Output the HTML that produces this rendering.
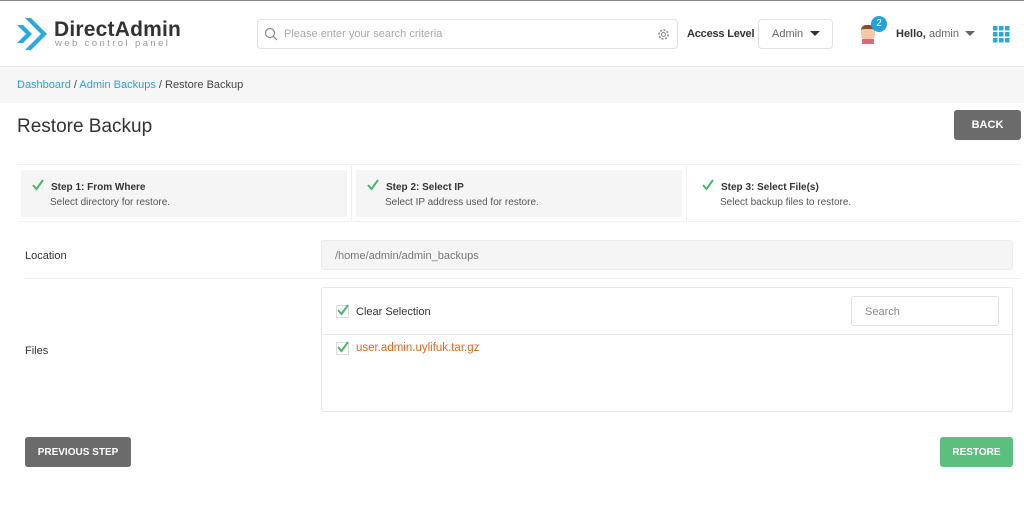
<!DOCTYPE html>
<html><head><style>
*{box-sizing:border-box;margin:0;padding:0}
body{width:1024px;height:509px;background:#fff;font-family:"Liberation Sans",sans-serif;color:#333;position:relative;overflow:hidden;font-size:11px}
.a{position:absolute}
.chk{position:absolute;width:13px;height:13px}
</style></head><body>
<div class="a" style="left:0;top:0;width:1024px;height:1px;background:#888"></div>
<div class="a" style="left:0;top:66px;width:1024px;height:37px;background:#f6f6f7;border-top:1px solid #e8e8e8"></div>
<!-- logo -->
<svg class="a" style="left:16px;top:16px" width="32" height="36" viewBox="0 0 32 36"><path d="M1 9 L10 18 L1 27 L7 27 L16 18 L7 9Z" fill="#2aa8e0"/><path d="M9 2 L25 18 L9 34 L15 34 L31 18 L15 2Z" fill="#2aa8e0"/></svg>
<div class="a" style="left:54px;top:18px;font-size:21px;font-weight:bold;color:#333;letter-spacing:0.2px">DirectAdmin</div>
<div class="a" style="left:55px;top:38px;font-size:9.5px;color:#999;letter-spacing:2.4px">web control panel</div>
<!-- search -->
<div class="a" style="left:257px;top:19px;width:421px;height:30px;border:1px solid #e2e2e2;border-radius:4px"></div>
<svg class="a" style="left:264px;top:27px" width="14" height="14"><circle cx="6" cy="6" r="4.5" fill="none" stroke="#888" stroke-width="1.2"/><path d="M9.5 9.5L13 13" stroke="#888" stroke-width="1.2"/></svg>
<div class="a" style="left:284px;top:28px;font-size:11px;color:#aaa">Please enter your search criteria</div>
<svg class="a" style="left:657px;top:28px" width="13" height="13"><circle cx="6.5" cy="6.5" r="4.5" fill="none" stroke="#888" stroke-width="1.5" stroke-dasharray="2 1.5"/><circle cx="6.5" cy="6.5" r="2" fill="none" stroke="#888"/></svg>
<div class="a" style="left:687px;top:28px;font-size:11px;font-weight:bold;letter-spacing:-0.2px">Access Level</div>
<div class="a" style="left:758px;top:19px;width:75px;height:30px;border:1px solid #e2e2e2;border-radius:4px"></div>
<div class="a" style="left:772px;top:28px;font-size:11px;color:#666">Admin</div>
<div class="a" style="left:810px;top:31px;border:5px solid transparent;border-top:5px solid #333"></div>
<!-- avatar -->
<div class="a" style="left:861px;top:25px;width:14px;height:15px;background:#f5c9a6;border-radius:5px;border-top:4px solid #8a4b2a"></div>
<div class="a" style="left:862px;top:39px;width:12px;height:5px;background:#d46a7a"></div>
<div class="a" style="left:871px;top:16px;width:16px;height:16px;border-radius:50%;background:#23a3dd;color:#fff;font-size:10px;text-align:center;line-height:16px">2</div>
<div class="a" style="left:896px;top:28px;font-size:11px"><b>Hello,</b> <span style="color:#666">admin</span></div>
<div class="a" style="left:965px;top:31px;border:5px solid transparent;border-top:5px solid #666"></div>
<svg class="a" style="left:993px;top:26px" width="17" height="17"><g fill="#2aa8e0"><rect x="0" y="0" width="4.5" height="4.5"/><rect x="6" y="0" width="4.5" height="4.5"/><rect x="12" y="0" width="4.5" height="4.5"/><rect x="0" y="6" width="4.5" height="4.5"/><rect x="6" y="6" width="4.5" height="4.5"/><rect x="12" y="6" width="4.5" height="4.5"/><rect x="0" y="12" width="4.5" height="4.5"/><rect x="6" y="12" width="4.5" height="4.5"/><rect x="12" y="12" width="4.5" height="4.5"/></g></svg>
<!-- breadcrumb -->
<div class="a" style="left:17px;top:79px;font-size:11px;color:#444"><span style="color:#2aa0dc">Dashboard</span> / <span style="color:#2aa0dc">Admin Backups</span> / Restore Backup</div>
<div class="a" style="left:17px;top:116px;font-size:19px;color:#333">Restore Backup</div>
<div class="a" style="left:954px;top:110px;width:67px;height:30px;background:#6b6b6b;border-radius:3px;color:#fff;font-weight:bold;font-size:11px;text-align:center;line-height:31px">BACK</div>
<!-- steps -->
<div class="a" style="left:17px;top:164px;width:1004px;height:1px;background:#f0f0f0"></div>
<div class="a" style="left:17px;top:221px;width:1004px;height:1px;background:#f0f0f0"></div>
<div class="a" style="left:21px;top:170px;width:326px;height:47px;background:#f5f5f5"></div>
<div class="a" style="left:356px;top:170px;width:326px;height:47px;background:#f5f5f5"></div>
<div class="a" style="left:351px;top:166px;width:1px;height:55px;background:#f0f0f0"></div>
<div class="a" style="left:686px;top:166px;width:1px;height:55px;background:#f0f0f0"></div>
<svg class="chk" style="left:31px;top:178px"><path d="M2 7l3.5 4L12 2" fill="none" stroke="#4cb56e" stroke-width="2"/></svg>
<div class="a" style="left:51px;top:182px;font-size:10px;font-weight:bold">Step 1: From Where</div>
<div class="a" style="left:50px;top:197px;font-size:10px;color:#555">Select directory for restore.</div>
<svg class="chk" style="left:366px;top:178px"><path d="M2 7l3.5 4L12 2" fill="none" stroke="#4cb56e" stroke-width="2"/></svg>
<div class="a" style="left:386px;top:182px;font-size:10px;font-weight:bold">Step 2: Select IP</div>
<div class="a" style="left:385px;top:197px;font-size:10px;color:#555">Select IP address used for restore.</div>
<svg class="chk" style="left:701px;top:178px"><path d="M2 7l3.5 4L12 2" fill="none" stroke="#4cb56e" stroke-width="2"/></svg>
<div class="a" style="left:721px;top:182px;font-size:10px;font-weight:bold">Step 3: Select File(s)</div>
<div class="a" style="left:720px;top:197px;font-size:10px;color:#555">Select backup files to restore.</div>
<!-- location -->
<div class="a" style="left:25px;top:250px;font-size:11px">Location</div>
<div class="a" style="left:321px;top:240px;width:692px;height:30px;background:#f5f5f5;border:1px solid #ebebeb;border-radius:3px"></div>
<div class="a" style="left:335px;top:250px;font-size:11px;color:#777">/home/admin/admin_backups</div>
<div class="a" style="left:25px;top:278px;width:996px;height:1px;background:#eee"></div>
<!-- files -->
<div class="a" style="left:25px;top:345px;font-size:11px">Files</div>
<div class="a" style="left:321px;top:287px;width:692px;height:125px;border:1px solid #e6e6e6;border-radius:3px"></div>
<div class="a" style="left:322px;top:334px;width:690px;height:1px;background:#e8e8e8"></div>
<div class="a" style="left:336px;top:305px;width:13px;height:13px;border:1px solid #ddd"></div>
<svg class="chk" style="left:336px;top:303px"><path d="M2 7l3.5 4L12 2" fill="none" stroke="#4cb56e" stroke-width="2"/></svg>
<div class="a" style="left:356px;top:306px;font-size:11px">Clear Selection</div>
<div class="a" style="left:851px;top:296px;width:148px;height:30px;border:1px solid #e2e2e2;border-radius:3px"></div>
<div class="a" style="left:865px;top:306px;font-size:11px;color:#888">Search</div>
<div class="a" style="left:336px;top:342px;width:13px;height:13px;border:1px solid #ddd"></div>
<svg class="chk" style="left:336px;top:340px"><path d="M2 7l3.5 4L12 2" fill="none" stroke="#4cb56e" stroke-width="2"/></svg>
<div class="a" style="left:356px;top:342px;font-size:11.5px;color:#e8661d">user.admin.uylifuk.tar.gz</div>
<!-- buttons -->
<div class="a" style="left:25px;top:437px;width:106px;height:30px;background:#6b6b6b;border-radius:3px;color:#fff;font-weight:bold;font-size:10px;text-align:center;line-height:31px">PREVIOUS STEP</div>
<div class="a" style="left:940px;top:437px;width:73px;height:30px;background:#5cbf7e;border-radius:3px;color:#fff;font-weight:bold;font-size:10px;text-align:center;line-height:31px">RESTORE</div>
</body></html>
